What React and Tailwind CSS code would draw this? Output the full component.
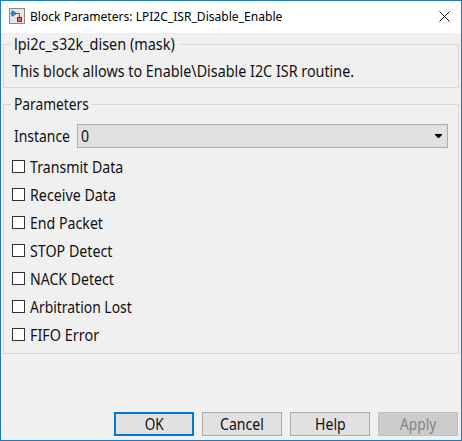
const OPTIONS = [
  ["Transmit Data", "scale-x-[0.885]"],
  ["Receive Data", "scale-x-[0.89]"],
  ["End Packet", "scale-x-[0.885]"],
  ["STOP Detect", "scale-x-[0.89]"],
  ["NACK Detect", "scale-x-[0.88]"],
  ["Arbitration Lost", "scale-x-[0.87]"],
  ["FIFO Error", "scale-x-[0.9]"],
];

function Label({ children, className = "" }) {
  return <span className={`inline-block origin-left whitespace-nowrap ${className}`}>{children}</span>;
}

function Group({ title, titleWidth, titleScale, className = "", children }) {
  return (
    <section className={`flex flex-col ${className}`}>
      <div className="flex h-[22px] shrink-0">
        <div className="mt-[11px] w-2 border-l border-t border-[#d8d8d8]" />
        <h2 className={`shrink-0 pl-[3px] leading-[22px] ${titleWidth}`}>
          <Label className={titleScale}>{title}</Label>
        </h2>
        <div className="mt-[11px] grow border-r border-t border-[#d8d8d8]" />
      </div>
      <div className="grow border-x border-b border-[#d8d8d8]">{children}</div>
    </section>
  );
}

function BlockIcon() {
  return (
    <svg width="16" height="16" viewBox="0 0 16 16" className="mb-[2px] shrink-0">
      <rect x="0.5" y="0.5" width="15" height="15" fill="#e6e6e6" stroke="#8a8a8a" />
      <path d="M1.5 5.5H10.5V9" fill="none" stroke="#555" />
      <path d="M3 2.8v5.4l4.5-2.7z" fill="#3b9bd0" stroke="#20608f" />
      <rect x="8.5" y="9.5" width="4" height="4" fill="#dc6b50" stroke="#8f2918" />
    </svg>
  );
}

function Button({ children, className = "border border-[#adadad] bg-[#e1e1e1]", scale = "scale-x-[0.88]" }) {
  return (
    <button className={`flex h-6 w-20 items-center justify-center leading-none ${className}`}>
      <span className={`inline-block ${scale}`}>{children}</span>
    </button>
  );
}

export default function App() {
  return (
    <div className="flex h-[441px] w-[462px] flex-col border border-[#1f78c1] bg-[#f0f0f0] font-['Noto_Sans',sans-serif] text-[16px] text-[#101010]">
      <header className="flex h-8 shrink-0 items-center bg-white pl-2 text-[12px] text-black">
        <BlockIcon />
        <Label className="ml-[5px] scale-x-[1.006]">Block Parameters: LPI2C_ISR_Disable_Enable</Label>
        <svg width="11" height="11" viewBox="0 0 11 11" className="mb-[1px] ml-auto mr-[11px] shrink-0">
          <path d="M.5.5l10 10M10.5.5l-10 10" stroke="#111" fill="none" />
        </svg>
      </header>
      <Group title="lpi2c_s32k_disen (mask)" titleWidth="w-[169px]" titleScale="scale-x-[0.903]" className="ml-[2px] mr-[2px] h-[55px]">
        <p className="pl-2 pt-[5px] leading-[22px]">
          <Label className="scale-x-[0.896]">This block allows to Enable\Disable I2C ISR routine.</Label>
        </p>
      </Group>
      <Group title="Parameters" titleWidth="w-[81px]" titleScale="scale-x-[0.86]" className="ml-[2px] mr-[2px] mt-[5px] h-[261px]">
        <div className="ml-[10px] mr-[10px] mt-[9px] flex h-6 items-center">
          <div className="w-[63px] leading-none"><Label className="scale-x-[0.87]">Instance</Label></div>
          <div className="flex h-6 grow items-center justify-between border border-[#adadad] bg-[#e1e1e1] pl-[3px] pr-[5px] leading-none">
            <Label className="scale-x-[0.88]">0</Label>
            <svg width="7" height="4" viewBox="0 0 7 4"><path d="M0 0h7v1L4 4H3L0 1z" fill="#000" /></svg>
          </div>
        </div>
        <ul className="ml-2 mt-[4px]">
          {OPTIONS.map(([name, scale]) => (
            <li key={name} className="flex h-7 items-center gap-[5px] leading-none">
              <span className="mt-px size-[13px] shrink-0 border border-[#333] bg-white" />
              <Label className={`pt-[2px] ${scale}`}>{name}</Label>
            </li>
          ))}
        </ul>
      </Group>
      <footer className="mb-[4px] mr-[3px] mt-auto flex justify-end gap-2">
        <Button className="border-2 border-[#0078d7] bg-[#e1e1e1]" scale="scale-x-[0.85]">OK</Button>
        <Button>Cancel</Button>
        <Button>Help</Button>
        <Button className="border border-[#bfbfbf] bg-[#cccccc] text-[#838383]" scale="scale-x-[0.86]">Apply</Button>
      </footer>
    </div>
  );
}
